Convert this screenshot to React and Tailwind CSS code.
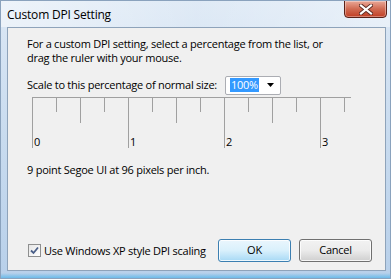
import React from 'react'

const font = { fontFamily: '"Open Sans", "Noto Sans", sans-serif' }

// ruler ticks every 24px, long every 4th, medium every 2nd
const ticks = Array.from({ length: 14 }, (_, i) => i)

const Ruler = () => (
    <div className="relative ml-[24px] mt-[2px] w-[320px] h-[52px]">
        <svg width="320" height="52" className="absolute left-0 top-0">
            <line x1="0" y1="0.5" x2="319" y2="0.5" stroke="#a0a0a0" />
            {ticks.map((i) => {
                const x = i * 24 + 0.5
                const h = i % 4 === 0 ? 51 : i % 2 === 0 ? 26 : 15
                return <line key={i} x1={x} y1="0" x2={x} y2={h} stroke="#a0a0a0" />
            })}
        </svg>
        {[0, 1, 2, 3].map((n) => (
            <span
                key={n}
                className="absolute top-[38px] text-[11px] leading-[14px] text-black"
                style={{ left: n * 96 + 2 }}
            >
                {n}
            </span>
        ))}
    </div>
)

export default function App() {
    return (
        <div
            className="relative w-[391px] h-[279px] overflow-hidden bg-gradient-to-b from-[#dce8f5] via-[#c8dbef] to-[#b8d0ea] border border-[#8aa2bd]"
            style={font}
        >
            {/* Glass glare */}
            <div className="absolute left-0 top-0 w-[391px] h-[26px] bg-gradient-to-r from-white/50 via-white/10 to-white/40" />

            {/* Title bar */}
            <div className="relative h-[26px] flex items-center pl-[6px] pt-[1px] text-[12px] tracking-[-0.2px] text-black">
                Custom DPI Setting
            </div>

            {/* Close button */}
            <div className="absolute top-[-1px] right-[3px] w-[43px] h-[18px] rounded-b-[4px] border border-[#5a2118] bg-gradient-to-b from-[#e9a898] via-[#d06a52] to-[#c03d22] flex items-center justify-center shadow-[inset_0_0_0_1px_rgba(255,255,255,0.35)]">
                <svg width="14" height="11" viewBox="0 0 14 11">
                    <path d="M2 1.5 L12 9.5 M12 1.5 L2 9.5" stroke="#5b2a22" strokeWidth="4" strokeLinecap="square" />
                    <path d="M2 1.5 L12 9.5 M12 1.5 L2 9.5" stroke="#ffffff" strokeWidth="2.2" strokeLinecap="square" />
                </svg>
            </div>

            {/* Client area */}
            <div className="relative ml-[6px] w-[379px] h-[244px] bg-[#f0f0f0] border border-[#8ea3ba] flex flex-col text-[11px] tracking-[-0.25px] text-black">
                <p className="pl-[19px] mt-[9px] leading-[14px]">
                    For a custom DPI setting, select a percentage from the list, or
                    <br />
                    drag the ruler with your mouse.
                </p>

                <div className="flex items-center pl-[19px] mt-[10px] h-[20px]">
                    <span className="w-[198px] shrink-0 whitespace-nowrap leading-[14px]">Scale to this percentage of normal size:</span>
                    <div className="w-[56px] h-[19px] bg-white border border-[#abadb3] rounded-[2px] flex items-center pl-[4px]">
                        <span className="bg-[#3399ff] text-white leading-[14px] px-[1px]">100%</span>
                        <svg width="8" height="4" viewBox="0 0 8 4" className="ml-auto mr-[5px]">
                            <path d="M0 0 H7 L3.5 4 Z" fill="#000" />
                        </svg>
                    </div>
                </div>

                <Ruler />

                <p className="pl-[19px] mt-[14px] leading-[14px]">9 point Segoe UI at 96 pixels per inch.</p>

                {/* Bottom row */}
                <div className="mt-auto mb-[8px] flex items-center pl-[20px] pr-[13px]">
                    <div className="w-[13px] h-[13px] border border-[#8e8f8f] bg-gradient-to-br from-[#e6e6e6] to-white flex items-center justify-center">
                        <svg width="9" height="9" viewBox="0 0 9 9">
                            <path d="M1 4.5 L3.5 7 L8 1.5" stroke="#4a5f88" strokeWidth="1.8" fill="none" />
                        </svg>
                    </div>
                    <span className="ml-[3px] leading-[14px]">Use Windows XP style DPI scaling</span>

                    <button className="ml-auto w-[73px] h-[23px] rounded-[3px] border border-[#3c7fb1] bg-gradient-to-b from-[#eaf6fd] via-[#d9f0fc] to-[#a7d9f5] shadow-[inset_0_0_0_1px_rgba(255,255,255,0.8)] text-[11px] text-black">
                        OK
                    </button>
                    <button className="ml-[8px] w-[73px] h-[23px] rounded-[3px] border border-[#707070] bg-gradient-to-b from-[#f2f2f2] via-[#ebebeb] to-[#cfcfcf] shadow-[inset_0_0_0_1px_rgba(255,255,255,0.8)] text-[11px] text-black">
                        Cancel
                    </button>
                </div>
            </div>

            {/* Bottom glow */}
            <div className="absolute left-0 bottom-0 w-[391px] h-[5px] bg-gradient-to-b from-transparent to-[#6cbbe9]" />
        </div>
    )
}
